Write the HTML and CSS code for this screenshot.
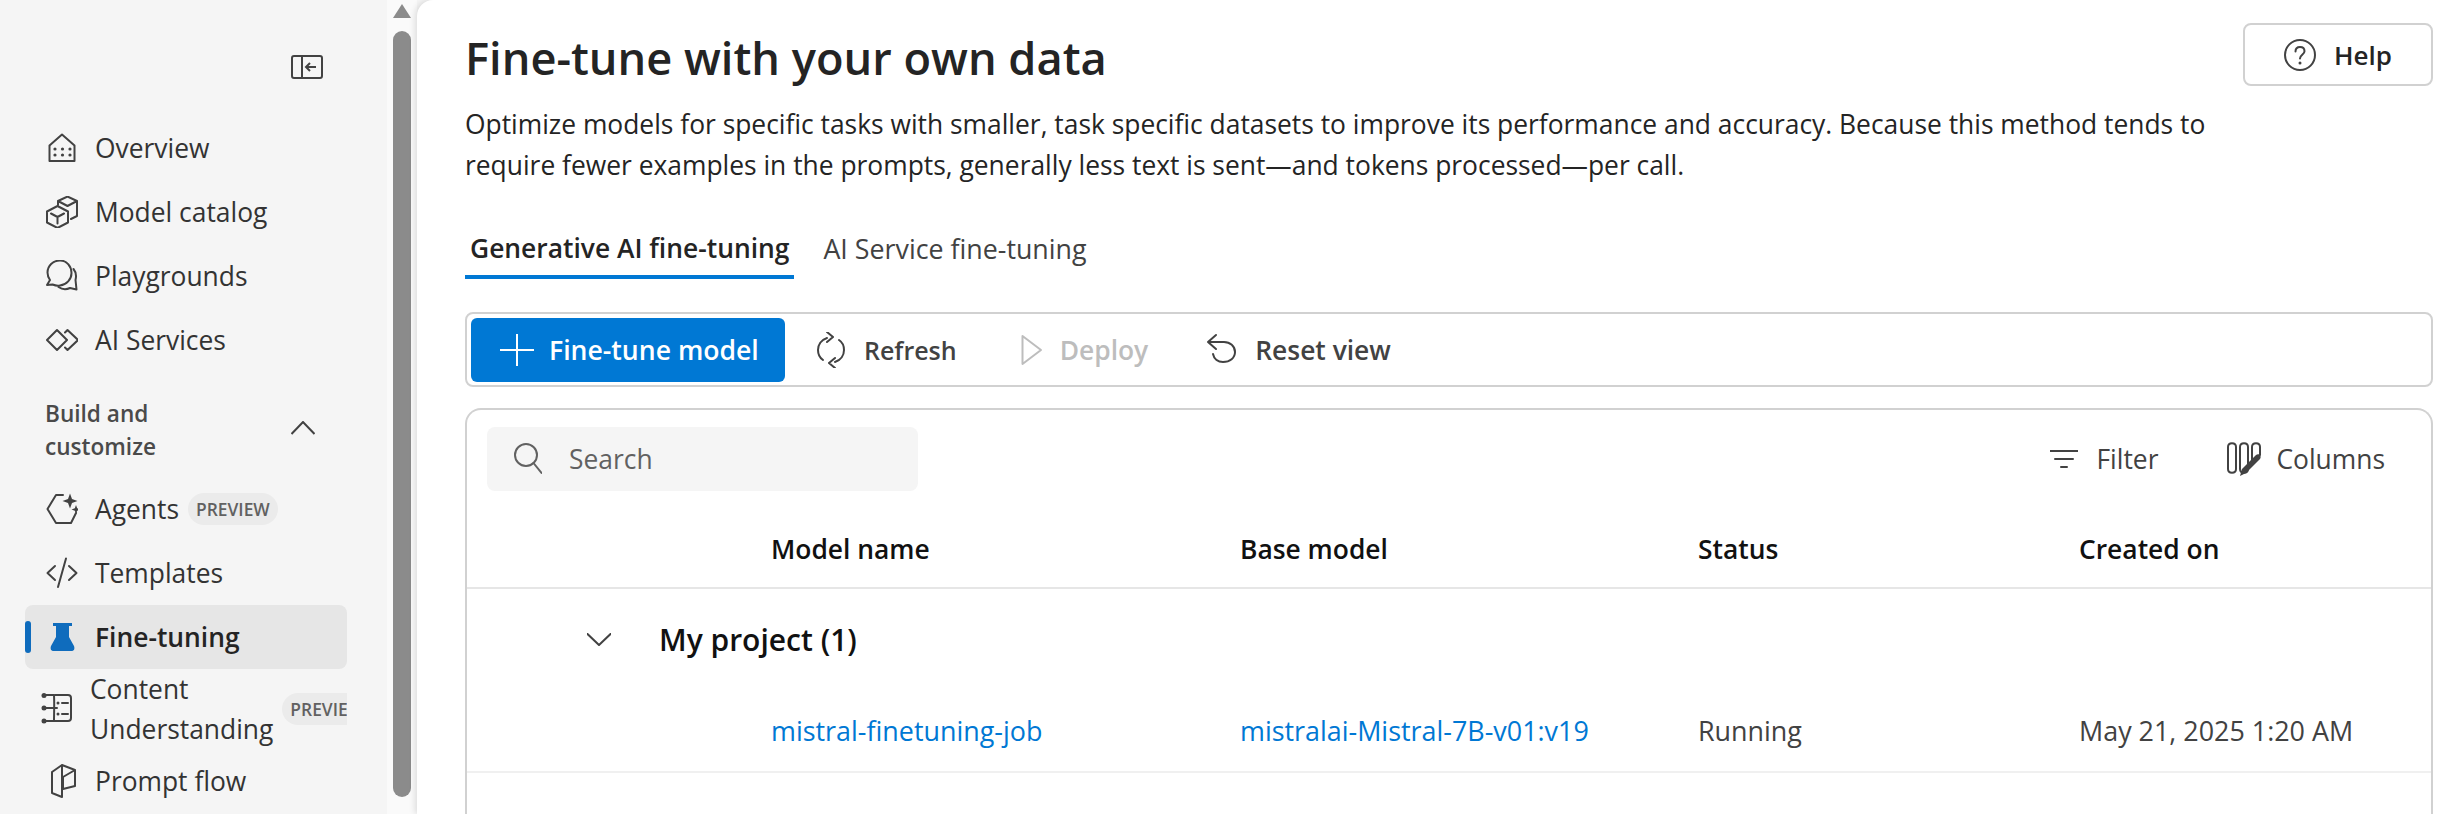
FILE: index.html
```html
<!DOCTYPE html>
<html lang="en">

<head>
    <meta charset="UTF-8">
    <title>Fine-tune with your own data</title>
    <link rel="stylesheet" href="styles.css">
</head>

<body>
    <div class="app">
        <nav class="sidebar">
            <div class="collapse-row">
                <svg class="collapse-icon" viewBox="0 0 32 24"><rect x="1" y="1" width="30" height="22" rx="2"/><path d="M11 1v22M25 12h-10M19 8l-4 4 4 4"/></svg>
            </div>
            <a class="nav-item">
                <svg class="icon" viewBox="0 0 32 32"><path d="M3.5 29V13.5L16 2.5l12.5 11V29z"/><g class="dots"><circle cx="9" cy="17" r="1.6"/><circle cx="16.5" cy="17" r="1.6"/><circle cx="24" cy="17" r="1.6"/><circle cx="9" cy="23" r="1.6"/><circle cx="16.5" cy="23" r="1.6"/><circle cx="24" cy="23" r="1.6"/></g></svg>
                <span>Overview</span>
            </a>
            <a class="nav-item">
                <svg class="icon" viewBox="0 0 32 32"><path d="M11.5 10L22 15.5v11L11.5 32 1 26.5v-11zM5 17.5l6.500 3.500 6.500-3.500M11.5 21v6.5M12 9V5l9.500-4.500L31 5v15l-6 3M12 5l9.500 5L31 5"/></svg>
                <span>Model catalog</span>
            </a>
            <a class="nav-item">
                <svg class="icon" viewBox="0 0 32 32"><path d="M14 .5C7 .5 1.500 6 1.500 12.500c0 3 1 5.500 2.500 7.500l-3 5 5.500-.500c2.500 1 5 1.500 7.500 1 6.500-1 11.500-6 11.500-12.500S21 .5 14 .5z"/><path d="M27.500 9c2.500 3 3 7 2 11l1 9.500-6.500-1.500c-4 2-8 1.500-11.500-1"/></svg>
                <span>Playgrounds</span>
            </a>
            <a class="nav-item">
                <svg class="icon" viewBox="0 0 32 32"><path d="M11 6l10 10-10 10L1 16zM19 8.500L21.500 6 32 16 21.500 26 19 23.500"/></svg>
                <span>AI Services</span>
            </a>
            <div class="nav-section">
                <span>Build and<br>customize</span>
                <svg class="section-chevron" viewBox="0 0 24 14"><path d="M0.500 13L12 1l11.500 12"/></svg>
            </div>
            <a class="nav-item">
                <svg class="icon" viewBox="0 0 32 32"><path d="M17 2H10L1.500 16 10 30h15l5-10"/><path class="solid" d="M24 .5l2 5.500 5.500 2-5.500 2-2 5.500-2-5.500-5.500-2 5.500-2zM30 12l1.200 3.300 3.300 1.200-3.300 1.200L30 21l-1.200-3.300-3.300-1.200 3.300-1.200z"/></svg>
                <span>Agents</span>
                <span class="badge">PREVIEW</span>
            </a>
            <a class="nav-item">
                <svg class="icon" viewBox="0 0 32 32"><path d="M9 9l-7.500 7L9 23M23 9l7.500 7L23 23M20 1.500L12 30"/></svg>
                <span>Templates</span>
            </a>
            <a class="nav-item nav-item-active">
                <svg class="icon" viewBox="0 0 32 32"><path class="flask" d="M7 2h19v3h-3v11l5 9c1 3 0 5-3 5H8c-3 0-4-2-3-5l5-9V5H7z"/></svg>
                <span>Fine-tuning</span>
            </a>
            <a class="nav-item nav-item-tall">
                <svg class="icon" viewBox="0 0 32 32"><path d="M5 2h8c.5 9 0 19 0 26H5M2 15h14M14 2h13c2 0 3 1 3 3v20c0 2-1 3-3 3H13M21 10h6M21 21h6"/><g class="dots"><circle cx="3" cy="2.500" r="2.500"/><circle cx="3" cy="15" r="2.500"/><circle cx="3" cy="28" r="2.500"/><circle cx="17" cy="10" r="1.500"/><circle cx="17" cy="21" r="1.500"/></g></svg>
                <span class="nav-label-wrap">Content<br>Understanding</span>
                <span class="badge">PREVIEW</span>
            </a>
            <a class="nav-item">
                <svg class="icon prompt-icon" viewBox="0 0 32 34"><path d="M16 1L6 8v21l10 4zM16 1l13 5v16l-12 3V13l12-7"/></svg>
                <span>Prompt flow</span>
            </a>
        </nav>

        <div class="scrollbar">
            <div class="scroll-up"></div>
            <div class="scroll-thumb"></div>
        </div>

        <main class="content">
            <header class="page-head">
                <div>
                    <h1>Fine-tune with your own data</h1>
                    <p>Optimize models for specific tasks with smaller, task specific datasets to improve its performance and accuracy. Because this method tends to<br>require fewer examples in the prompts, generally less text is sent—and tokens processed—per call.</p>
                </div>
                <button class="help-btn">
                    <svg class="icon" viewBox="0 0 32 32"><circle cx="16" cy="16" r="15"/><path d="M11.500 12.500c0-3 2-4.500 4.500-4.500s4.500 1.500 4.500 4.200c0 3.500-4.500 3.800-4.500 7.300"/><circle class="solid" cx="16" cy="24" r="1.500"/></svg>
                    Help
                </button>
            </header>

            <div class="tabs">
                <a class="tab tab-active">Generative AI fine-tuning</a>
                <a class="tab tab-other">AI Service fine-tuning</a>
            </div>

            <div class="toolbar">
                <button class="btn-primary">
                    <svg class="icon" viewBox="0 0 34 32"><path d="M17 0v32M0 16h34"/></svg>
                    Fine-tune model
                </button>
                <button class="btn-plain btn-refresh">
                    <svg class="icon" viewBox="0 0 32 36"><path d="M12 6C6 8 3 13 3 18c0 4 2 8 5 10M12 0l6 5-6 5M20 30c6-2 9-7 9-12 0-4-2-8-5-10M20 36l-6-5 6-5"/></svg>
                    Refresh
                </button>
                <button class="btn-plain btn-disabled">
                    <svg class="icon" viewBox="0 0 22 32"><path d="M1.500 2L20 16 1.500 30z"/></svg>
                    Deploy
                </button>
                <button class="btn-plain btn-reset">
                    <svg class="icon" viewBox="0 0 32 32"><path d="M10 1L2 8l8 7M2 8h16c6 0 11 4 11 10s-5 10-12 10c-5 0-9-3-10-8"/></svg>
                    Reset view
                </button>
            </div>

            <section class="card">
                <div class="card-top">
                    <div class="search">
                        <svg class="icon" viewBox="0 0 28 32"><circle cx="12" cy="12" r="11"/><path d="M19.500 20l8 10"/></svg>
                        <span>Search</span>
                    </div>
                    <div class="card-actions">
                        <span class="card-action">
                            <svg class="icon" viewBox="0 0 28 20"><path d="M0 2h28M5 10h18M11 18h6"/></svg>
                            Filter
                        </span>
                        <span class="card-action">
                            <svg class="icon" viewBox="0 0 36 34"><path d="M2 5c0-5 8-5 8 0v22c0 5-8 5-8 0zM14 5c0-5 8-5 8 0v22c0 5-8 5-8 0zM26 18V5c0-5 8-5 8 0v8"/><path class="solid" d="M30 13c3-2 6 1 4 4L20 31l-6 3 2-7z"/></svg>
                            Columns
                        </span>
                    </div>
                </div>

                <div class="row row-head">
                    <span></span>
                    <span>Model name</span>
                    <span>Base model</span>
                    <span>Status</span>
                    <span>Created on</span>
                </div>
                <div class="group-row">
                    <svg class="icon" viewBox="0 0 24 13"><path d="M0.500 1L12 12 23.500 1"/></svg>
                    <span>My project (1)</span>
                </div>
                <div class="row row-body">
                    <span></span>
                    <a class="link">mistral-finetuning-job</a>
                    <a class="link">mistralai-Mistral-7B-v01:v19</a>
                    <span>Running</span>
                    <span>May 21, 2025 1:20 AM</span>
                </div>
            </section>
        </main>
    </div>
</body>

</html>
```

FILE: styles.css
```css
* {
    box-sizing: border-box;
}

html,
body {
    margin: 0;
    height: 100%;
    overflow: hidden;
}

body {
    font-family: "Open Sans", "Liberation Sans", sans-serif;
    font-size: 26.4px;
    color: #242424;
    background: #f5f5f5;
}

.app {
    display: flex;
    height: 814px;
}

.icon {
    fill: none;
    stroke: #424242;
    stroke-width: 2;
    stroke-linejoin: round;
    stroke-linecap: round;
    flex: none;
}

.icon .dots,
.icon .solid {
    fill: #424242;
    stroke: none;
}

/* sidebar */
.sidebar {
    width: 387px;
    flex: none;
    padding-left: 25px;
    background: #f5f5f5;
}

.collapse-row {
    height: 116px;
    padding: 55px 0 0 266px;
}

.collapse-icon {
    display: block;
    width: 32px;
    height: 24px;
    fill: none;
    stroke: #424242;
    stroke-width: 2;
}

.nav-item {
    display: flex;
    align-items: center;
    width: 322px;
    height: 64px;
    padding-left: 21px;
    color: #333;
    border-radius: 8px;
    overflow: hidden;
    position: relative;
}

.nav-item .icon {
    width: 32px;
    height: 32px;
    margin-right: 17px;
}

.nav-item-active {
    background: #e6e6e6;
    font-weight: 600;
    color: #242424;
}

.nav-item-active::before {
    content: "";
    position: absolute;
    left: 0;
    top: 16px;
    width: 6px;
    height: 32px;
    border-radius: 3px;
    background: #0f6cbd;
}

.flask {
    fill: #0f6cbd;
    stroke: none;
}

.nav-item-tall {
    height: 80px;
    padding-left: 16px;
}

.nav-label-wrap {
    line-height: 40px;
}

.nav-item .prompt-icon {
    height: 34px;
}

.nav-section {
    display: flex;
    align-items: center;
    justify-content: space-between;
    width: 290px;
    height: 105px;
    padding: 11px 0 0 20px;
    font-size: 22.6px;
    font-weight: 600;
    line-height: 33px;
    color: #4a4a4a;
}

.section-chevron {
    width: 24px;
    height: 14px;
    margin-top: -4px;
    fill: none;
    stroke: #424242;
    stroke-width: 2;
}

.badge {
    flex: none;
    margin-left: 9px;
    padding: 0 8px;
    height: 32px;
    line-height: 32px;
    font-size: 17.4px;
    font-weight: 600;
    color: #616161;
    background: #ebebeb;
    border-radius: 16px;
}

/* page scrollbar */
.scrollbar {
    width: 30px;
    flex: none;
    padding: 4px 6px 0;
    background: #fafafa;
}

.scroll-up {
    width: 0;
    margin: 0 auto;
    border-left: 9px solid transparent;
    border-right: 9px solid transparent;
    border-bottom: 14px solid #8b8b8b;
}

.scroll-thumb {
    width: 18px;
    height: 766px;
    margin-top: 13px;
    border-radius: 9px;
    background: #8b8b8b;
}

/* main panel */
.content {
    flex: 1;
    padding: 23px 29px 0 48px;
    background: #fff;
    border-top-left-radius: 16px;
    box-shadow: -2px 0 6px rgba(0, 0, 0, 0.12);
}

.page-head {
    display: flex;
    justify-content: space-between;
    align-items: flex-start;
    height: 197px;
}

h1 {
    margin: 5px 0 0;
    font-size: 45.2px;
    line-height: 60px;
    font-weight: 600;
}

.page-head p {
    margin: 16px 0 0;
    line-height: 41px;
}

.help-btn {
    display: flex;
    align-items: center;
    justify-content: center;
    gap: 18px;
    width: 190px;
    height: 63px;
    padding: 0;
    font: 600 26px "Open Sans", sans-serif;
    color: #242424;
    background: #fff;
    border: 2px solid #d1d1d1;
    border-radius: 8px;
}

.help-btn .icon {
    width: 32px;
    height: 32px;
}

.tabs {
    display: flex;
    height: 59px;
    gap: 24px;
}

.tab {
    padding: 0 5px;
    line-height: 57px;
    color: #424242;
}

.tab-other {
    font-size: 26.8px;
}

.tab-active {
    font-weight: 600;
    color: #242424;
    border-bottom: 4px solid #0078d4;
    height: 59px;
}

.toolbar {
    display: flex;
    align-items: center;
    height: 75px;
    margin-top: 33px;
    padding: 0 4px;
    border: 2px solid #d1d1d1;
    border-radius: 8px;
}

.toolbar button {
    display: flex;
    align-items: center;
    height: 64px;
    border: 0;
    padding: 0;
    font: 600 26.4px "Open Sans", sans-serif;
    background: none;
}

.toolbar .btn-primary {
    width: 314px;
    padding-left: 29px;
    gap: 15px;
    font-size: 26.6px;
    color: #fff;
    background: #0078d4;
    border-radius: 6px;
}

.btn-primary .icon {
    width: 34px;
    height: 32px;
    stroke: #fff;
}

.toolbar .btn-plain {
    gap: 17px;
    color: #424242;
    margin-left: 30px;
}

.toolbar .btn-refresh {
    font-size: 25px;
}

.btn-plain .icon {
    height: 36px;
    width: 32px;
}

.toolbar .btn-disabled {
    color: #bdbdbd;
    margin-left: 64px;
}

.btn-disabled .icon {
    width: 22px;
    height: 32px;
    stroke: #bdbdbd;
}

.toolbar .btn-reset {
    margin-left: 58px;
}

.card {
    height: 420px;
    margin-top: 21px;
    border: 2px solid #d1d1d1;
    border-bottom: 0;
    border-radius: 16px 16px 0 0;
}

.card-top {
    display: flex;
    align-items: center;
    justify-content: space-between;
    padding: 17px 46px 0 20px;
}

.search {
    display: flex;
    align-items: center;
    gap: 27px;
    width: 431px;
    height: 64px;
    padding-left: 27px;
    color: #616161;
    background: #f5f5f5;
    border-radius: 8px;
}

.search .icon {
    width: 28px;
    height: 32px;
    stroke: #616161;
}

.card-actions {
    display: flex;
    gap: 68px;
    font-weight: 500;
    color: #424242;
}

.card-action {
    display: flex;
    align-items: center;
    gap: 18px;
}

.card-action .icon {
    width: 28px;
    height: 20px;
}

.card-action:last-child {
    gap: 14px;
}

.card-action:last-child .icon {
    width: 36px;
    height: 34px;
}

.row {
    display: grid;
    grid-template-columns: 304px 469px 458px 381px 1fr;
    align-items: center;
}

.row-head {
    height: 98px;
    padding-top: 19px;
    font-weight: 600;
    color: #111;
    border-bottom: 2px solid #e6e6e6;
}

.group-row {
    display: flex;
    align-items: center;
    height: 101px;
    padding-left: 120px;
    font-size: 30px;
    font-weight: 600;
    color: #111;
}

.group-row .icon {
    width: 24px;
    height: 13px;
    margin-right: 48px;
}

.row-body {
    height: 83px;
    border-bottom: 2px solid #f0f0f0;
    color: #424242;
    font-size: 26.9px;
}

.link {
    color: #0078d4;
}
```
